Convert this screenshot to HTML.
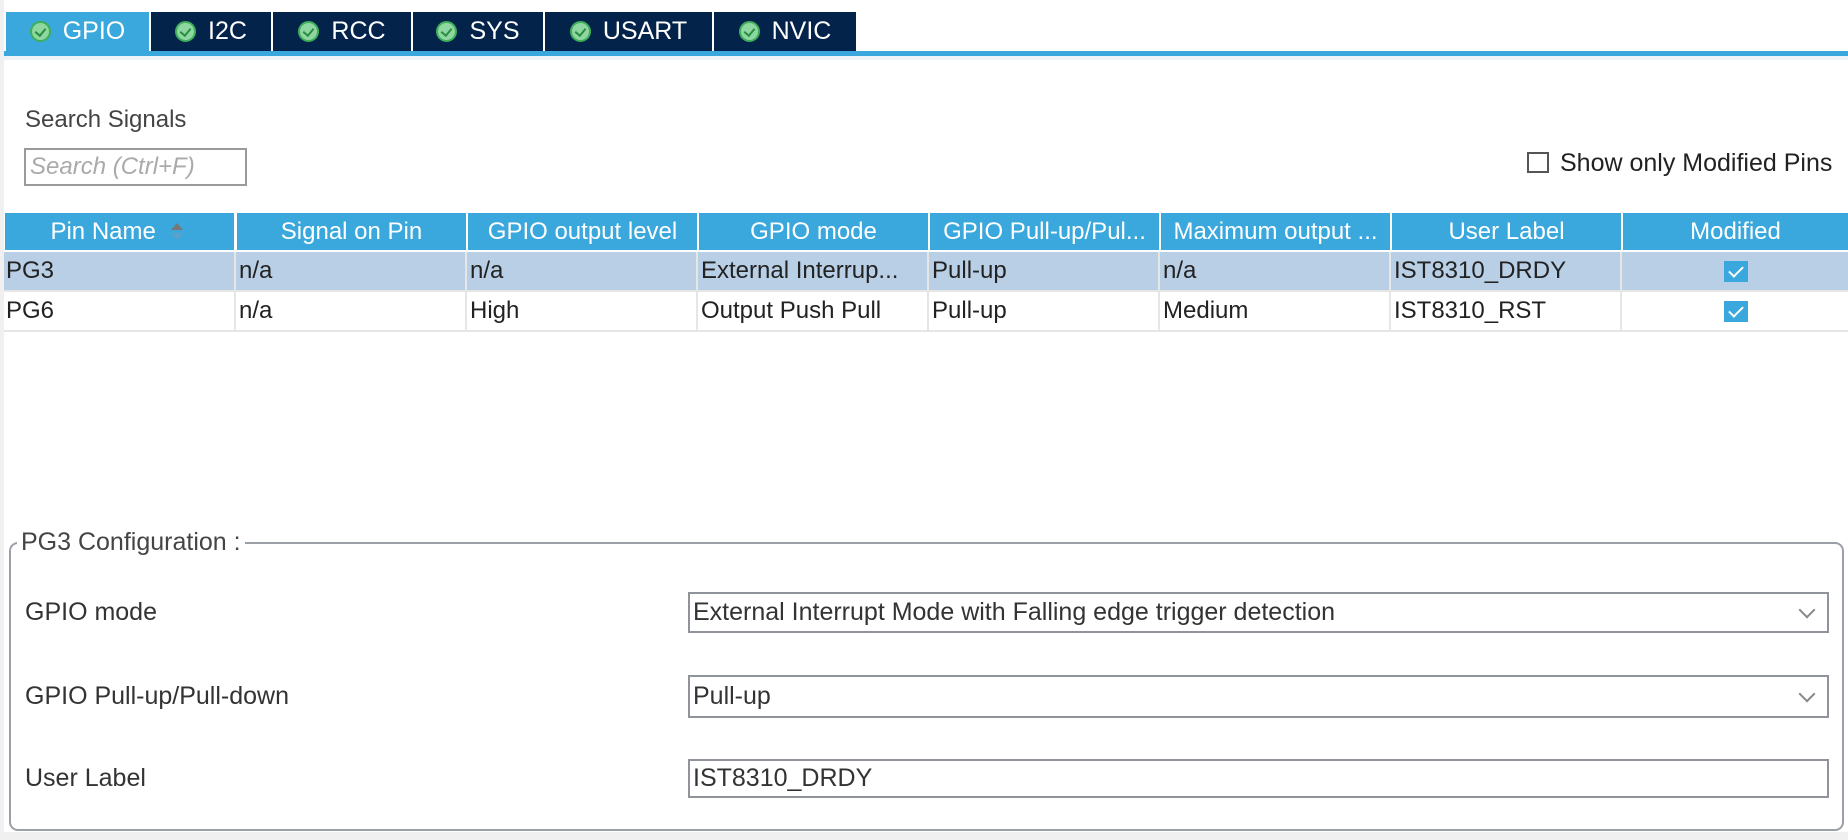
<!DOCTYPE html>
<html><head><style>
*{box-sizing:border-box;margin:0;padding:0}
body{width:1848px;height:840px;background:#fff;font-family:"Liberation Sans",sans-serif;position:relative;overflow:hidden;color:#333}
.abs{position:absolute}
.tab{position:absolute;top:12px;height:39px;background:#03234b;color:#fff;font-size:25px;line-height:39px;display:flex;align-items:center;justify-content:center;gap:12px}
.tab.active{background:#3aa8dc}
.ic{width:21px;height:21px;border-radius:50%;background:#8fd7a0;border:2px solid #3fae5a;display:inline-block;position:relative}
.ic:after{content:"";position:absolute;left:5px;top:3px;width:5px;height:8px;border:solid #2a8f45;border-width:0 2px 2px 0;transform:rotate(40deg)}
.th{position:absolute;top:213px;height:37px;background:#3aa8dc;color:#fff;font-size:24px;line-height:37px;text-align:center;white-space:nowrap;overflow:hidden}
.td{position:absolute;height:38px;font-size:24px;line-height:38px;color:#222;padding-left:2px;white-space:nowrap}
.cb{position:absolute;width:24px;height:21px;background:#3aa8dc}
.cb:after{content:"";position:absolute;left:8px;top:2px;width:6px;height:12px;border:solid #fff;border-width:0 2px 2px 0;transform:rotate(45deg)}
.lbl{position:absolute;left:25px;font-size:25px;color:#333}
.sel{position:absolute;left:688px;width:1141px;border:2px solid #8e949a;font-size:25px;color:#333;padding-left:3px;display:flex;align-items:center}
.chev{position:absolute;right:14px;top:50%;width:12px;height:12px;border:solid #888;border-width:0 2px 2px 0;transform:translateY(-75%) rotate(45deg)}
</style></head><body>
<div class="abs" style="left:0;top:0;width:4px;height:840px;background:#f0f0f0"></div>
<div class="abs" style="left:0;top:832px;width:1848px;height:8px;background:#f0f0f0"></div>
<div class="tab active" style="left:6px;width:143px"><span class="ic"></span>GPIO</div>
<div class="tab" style="left:151px;width:120px"><span class="ic"></span>I2C</div>
<div class="tab" style="left:273px;width:138px"><span class="ic"></span>RCC</div>
<div class="tab" style="left:413px;width:130px"><span class="ic"></span>SYS</div>
<div class="tab" style="left:545px;width:167px"><span class="ic"></span>USART</div>
<div class="tab" style="left:714px;width:142px"><span class="ic"></span>NVIC</div>
<div class="abs" style="left:4px;top:51px;width:1844px;height:5px;background:#3aa8dc"></div>
<div class="abs" style="left:4px;top:56px;width:1844px;height:4px;background:#eef3f7"></div>

<div class="abs" style="left:25px;top:106px;font-size:24px;color:#444">Search Signals</div>
<div class="abs" style="left:24px;top:148px;width:223px;height:38px;border:2px solid #9a9a9a;font-size:24px;font-style:italic;color:#aaa;padding:3px 4px">Search (Ctrl+F)</div>
<div class="abs" style="left:1527px;top:152px;width:22px;height:21px;border:2px solid #555"></div>
<div class="abs" style="left:1560px;top:149px;font-size:25px;color:#222">Show only Modified Pins</div>

<div class="th" style="left:5px;width:229px">Pin Name <span style="display:inline-block;width:26px;position:relative;height:20px;vertical-align:middle"><span style="position:absolute;left:8px;top:0;border:6px solid transparent;border-bottom:7px solid #777;border-top:0"></span><span style="position:absolute;left:8px;top:10px;border:6px solid transparent;border-top:7px solid #5da0c8;border-bottom:0"></span></span></div>
<div class="th" style="left:237px;width:229px">Signal on Pin</div>
<div class="th" style="left:468px;width:229px">GPIO output level</div>
<div class="th" style="left:699px;width:229px">GPIO mode</div>
<div class="th" style="left:930px;width:229px">GPIO Pull-up/Pul...</div>
<div class="th" style="left:1161px;width:229px">Maximum output ...</div>
<div class="th" style="left:1392px;width:229px">User Label</div>
<div class="th" style="left:1623px;width:225px">Modified</div>

<div class="abs" style="left:4px;top:252px;width:1844px;height:38px;background:#b8cfe6"></div>
<div class="abs" style="left:4px;top:290px;width:1844px;height:2px;background:#e6e6e6"></div>
<div class="abs" style="left:4px;top:330px;width:1844px;height:2px;background:#e6e6e6"></div>
<div class="abs" style="left:234px;top:252px;width:2px;height:80px;background:#e6e6e6"></div>
<div class="abs" style="left:465px;top:252px;width:2px;height:80px;background:#e6e6e6"></div>
<div class="abs" style="left:696px;top:252px;width:2px;height:80px;background:#e6e6e6"></div>
<div class="abs" style="left:927px;top:252px;width:2px;height:80px;background:#e6e6e6"></div>
<div class="abs" style="left:1158px;top:252px;width:2px;height:80px;background:#e6e6e6"></div>
<div class="abs" style="left:1389px;top:252px;width:2px;height:80px;background:#e6e6e6"></div>
<div class="abs" style="left:1620px;top:252px;width:2px;height:80px;background:#e6e6e6"></div>

<div class="td" style="left:4px;top:252px">PG3</div>
<div class="td" style="left:237px;top:252px">n/a</div>
<div class="td" style="left:468px;top:252px">n/a</div>
<div class="td" style="left:699px;top:252px">External Interrup...</div>
<div class="td" style="left:930px;top:252px">Pull-up</div>
<div class="td" style="left:1161px;top:252px">n/a</div>
<div class="td" style="left:1392px;top:252px">IST8310_DRDY</div>
<div class="cb" style="left:1724px;top:261px"></div>

<div class="td" style="left:4px;top:292px">PG6</div>
<div class="td" style="left:237px;top:292px">n/a</div>
<div class="td" style="left:468px;top:292px">High</div>
<div class="td" style="left:699px;top:292px">Output Push Pull</div>
<div class="td" style="left:930px;top:292px">Pull-up</div>
<div class="td" style="left:1161px;top:292px">Medium</div>
<div class="td" style="left:1392px;top:292px">IST8310_RST</div>
<div class="cb" style="left:1724px;top:301px"></div>

<div class="abs" style="left:9px;top:542px;width:1835px;height:289px;border:2px solid #9aa0a6;border-radius:9px"></div>
<div class="abs" style="left:17px;top:528px;background:#fff;padding:0 4px;font-size:25px;color:#444">PG3 Configuration :</div>

<div class="lbl" style="top:598px">GPIO mode</div>
<div class="sel" style="top:592px;height:41px">External Interrupt Mode with Falling edge trigger detection<span class="chev"></span></div>
<div class="lbl" style="top:682px">GPIO Pull-up/Pull-down</div>
<div class="sel" style="top:675px;height:43px">Pull-up<span class="chev"></span></div>
<div class="lbl" style="top:764px">User Label</div>
<div class="sel" style="top:759px;height:39px">IST8310_DRDY</div>
</body></html>
